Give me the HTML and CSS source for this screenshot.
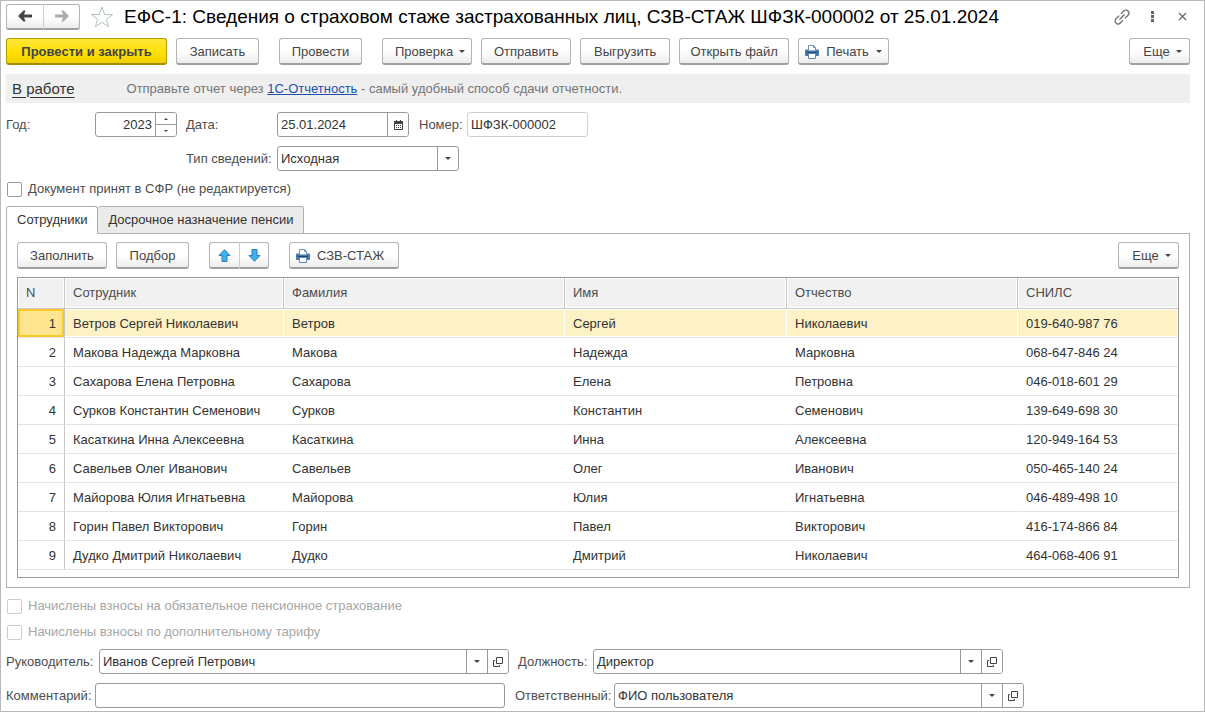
FILE: index.html
```
<!DOCTYPE html>
<html lang="ru">
<head>
<meta charset="utf-8">
<title>ЕФС-1: Сведения о страховом стаже</title>
<link rel="stylesheet" href="styles.css">
</head>
<body>
<svg class="sprite" aria-hidden="true">
  <symbol id="printer" viewBox="0 0 14 14">
    <path d="M3.500 5V.5h5l2 2V5" fill="#fff" stroke="#6b93b0"/>
    <path d="M8.500 .5v2h2" fill="none" stroke="#6b93b0"/>
    <path d="M1 4.500h2.500v1h7v-1H13q1 0 1 1V10q0 1-1 1H1q-1 0-1-1V5.500q0-1 1-1z" fill="#4678ac"/>
    <path d="M2 7.500h10" stroke="#1f4675"/>
    <path d="M3.500 8.500h7v5h-7z" fill="#fff" stroke="#5c8cb5"/>
  </symbol>
  <symbol id="open" viewBox="0 0 10 10">
    <path d="M3.500 .5h6v6h-6z" fill="none" stroke="#444"/>
    <path d="M2 3.500H.5v6h6V8" fill="none" stroke="#444"/>
  </symbol>
  <symbol id="arrow-up" viewBox="0 0 13 13">
    <path d="M6.500 .7 12 6.500H9v6H4v-6H1z" fill="#3fb0f0" stroke="#2b7db5"/>
  </symbol>
  <symbol id="arrow-down" viewBox="0 0 13 13">
    <path d="M6.500 12.300 12 6.500H9v-6H4v6H1z" fill="#3fb0f0" stroke="#2b7db5"/>
  </symbol>
</svg>
<main class="window">
  <header class="titlebar">
    <div class="group history">
      <button class="btn" aria-label="Назад"><svg width="14" height="12" viewBox="0 0 14 12"><path d="M0 6 5.500 .5h2L6 4.500h8v3H6l1.500 4h-2z" fill="#444"/></svg></button>
      <button class="btn" aria-label="Вперед"><svg width="14" height="12" viewBox="0 0 14 12"><path d="M14 6 8.500 .5h-2L8 4.500H0v3h8l-1.500 4h2z" fill="#aaa"/></svg></button>
    </div>
    <button class="plain star" aria-label="В избранное"><svg width="24" height="22" viewBox="0 0 24 22"><path d="M12 1.200 14.700 8.400 22.500 8.600 16.400 13.300 18.600 20.600 12 16.300 5.400 20.600 7.600 13.300 1.500 8.600 9.300 8.400z" fill="#fff" stroke="#b4c0c6"/></svg></button>
    <h1>ЕФС-1: Сведения о страховом стаже застрахованных лиц, СЗВ-СТАЖ ШФЗК-000002 от 25.01.2024</h1>
    <div class="tools">
      <button class="plain" aria-label="Ссылка"><svg width="16" height="16" viewBox="0 0 16 16"><g fill="none" stroke="#666" stroke-width="1.200" transform="rotate(-45 8 8)"><path d="M7 5H2.500a3 3 0 0 0 0 6H6.500M9 11h4.500a3 3 0 0 0 0-6H9.500M4.500 8h7"/></g></svg></button>
      <button class="plain" aria-label="Меню"><svg width="16" height="16" viewBox="0 0 16 16"><path d="M7 2h3v3H7zM7 6h3v3H7zM7 10h3v3H7z" fill="#666"/></svg></button>
      <button class="plain" aria-label="Закрыть"><svg width="16" height="16" viewBox="0 0 16 16"><path d="m5 4 7 7m0-7-7 7" stroke="#666" stroke-width="1.200"/></svg></button>
    </div>
  </header>

  <div class="commands">
    <button class="btn primary">Провести и закрыть</button>
    <button class="btn w-small">Записать</button>
    <button class="btn w-small spaced">Провести</button>
    <button class="btn w-medium drop spaced">Проверка<i class="caret"></i></button>
    <button class="btn w-medium">Отправить</button>
    <button class="btn w-medium">Выгрузить</button>
    <button class="btn w-wide">Открыть файл</button>
    <button class="btn w-medium iconic"><svg width="14" height="14"><use href="#printer"/></svg>Печать<i class="caret"></i></button>
    <button class="btn more">Еще<i class="caret"></i></button>
  </div>

  <div class="status">
    <a class="state" href="#">В работе</a>
    <p>Отправьте отчет через <a href="#">1С-Отчетность</a> - самый удобный способ сдачи отчетности.</p>
  </div>

  <div class="form">
    <label for="year">Год:</label>
    <div class="field year"><input id="year" value="2023"><span class="spin"><button aria-label="Больше"><i class="caret up"></i></button><button aria-label="Меньше"><i class="caret"></i></button></span></div>
    <label for="date">Дата:</label>
    <div class="line">
      <div class="field date"><input id="date" value="25.01.2024"><button aria-label="Календарь"><svg width="9" height="10" viewBox="0 0 9 10"><path d="M.5 1.500h8v8h-8z" fill="none" stroke="#444"/><path d="M0 1h9v3H0zM2 0h1v1H2zM6 0h1v1H6z" fill="#444"/><path d="M2 5.500h5M2 7.500h5" stroke="#444" stroke-dasharray="1 1"/></svg></button></div>
      <label for="number">Номер:</label>
      <div class="field number"><input id="number" value="ШФЗК-000002" readonly></div>
    </div>
    <label class="kind-label" for="kind">Тип сведений:</label>
    <div class="field kind"><select id="kind"><option>Исходная</option></select><i class="caret"></i></div>
  </div>

  <label class="check accepted"><input type="checkbox">Документ принят в СФР (не редактируется)</label>

  <div class="tabs" role="tablist">
    <button role="tab" aria-selected="true">Сотрудники</button>
    <button role="tab" aria-selected="false">Досрочное назначение пенсии</button>
  </div>
  <section class="panel">
    <div class="commands inner">
      <button class="btn w-medium">Заполнить</button>
      <button class="btn w-pick">Подбор</button>
      <div class="group move">
        <button class="btn" aria-label="Вверх"><svg width="13" height="13"><use href="#arrow-up"/></svg></button>
        <button class="btn" aria-label="Вниз"><svg width="13" height="13"><use href="#arrow-down"/></svg></button>
      </div>
      <button class="btn w-wide iconic"><svg width="14" height="14"><use href="#printer"/></svg>СЗВ-СТАЖ</button>
      <button class="btn more">Еще<i class="caret"></i></button>
    </div>
    <div class="grid">
      <table>
        <colgroup><col class="c-n"><col class="c-emp"><col class="c-last"><col class="c-first"><col class="c-mid"><col class="c-snils"></colgroup>
        <thead><tr><th>N</th><th>Сотрудник</th><th>Фамилия</th><th>Имя</th><th>Отчество</th><th>СНИЛС</th></tr></thead>
        <tbody>
          <tr class="selected"><td>1</td><td>Ветров Сергей Николаевич</td><td>Ветров</td><td>Сергей</td><td>Николаевич</td><td>019-640-987 76</td></tr>
          <tr><td>2</td><td>Макова Надежда Марковна</td><td>Макова</td><td>Надежда</td><td>Марковна</td><td>068-647-846 24</td></tr>
          <tr><td>3</td><td>Сахарова Елена Петровна</td><td>Сахарова</td><td>Елена</td><td>Петровна</td><td>046-018-601 29</td></tr>
          <tr><td>4</td><td>Сурков Константин Семенович</td><td>Сурков</td><td>Константин</td><td>Семенович</td><td>139-649-698 30</td></tr>
          <tr><td>5</td><td>Касаткина Инна Алексеевна</td><td>Касаткина</td><td>Инна</td><td>Алексеевна</td><td>120-949-164 53</td></tr>
          <tr><td>6</td><td>Савельев Олег Иванович</td><td>Савельев</td><td>Олег</td><td>Иванович</td><td>050-465-140 24</td></tr>
          <tr><td>7</td><td>Майорова Юлия Игнатьевна</td><td>Майорова</td><td>Юлия</td><td>Игнатьевна</td><td>046-489-498 10</td></tr>
          <tr><td>8</td><td>Горин Павел Викторович</td><td>Горин</td><td>Павел</td><td>Викторович</td><td>416-174-866 84</td></tr>
          <tr><td>9</td><td>Дудко Дмитрий Николаевич</td><td>Дудко</td><td>Дмитрий</td><td>Николаевич</td><td>464-068-406 91</td></tr>
        </tbody>
      </table>
    </div>
  </section>

  <div class="checks">
    <label class="check"><input type="checkbox" disabled>Начислены взносы на обязательное пенсионное страхование</label>
    <label class="check"><input type="checkbox" disabled>Начислены взносы по дополнительному тарифу</label>
  </div>

  <div class="footer">
    <div class="line">
      <label class="l-head" for="head">Руководитель:</label>
      <div class="field long"><input id="head" value="Иванов Сергей Петрович"><button aria-label="Выбрать"><i class="caret"></i></button><button aria-label="Открыть"><svg width="10" height="10"><use href="#open"/></svg></button></div>
      <label class="l-post" for="post">Должность:</label>
      <div class="field long"><input id="post" value="Директор"><button aria-label="Выбрать"><i class="caret"></i></button><button aria-label="Открыть"><svg width="10" height="10"><use href="#open"/></svg></button></div>
    </div>
    <div class="line">
      <label class="l-note" for="note">Комментарий:</label>
      <div class="field long"><input id="note"></div>
      <label class="l-resp" for="resp">Ответственный:</label>
      <div class="field long"><input id="resp" value="ФИО пользователя"><button aria-label="Выбрать"><i class="caret"></i></button><button aria-label="Открыть"><svg width="10" height="10"><use href="#open"/></svg></button></div>
    </div>
  </div>
</main>
</body>
</html>
```

FILE: styles.css
```
* { box-sizing: border-box; }
body { margin: 0; background: #fff; color: #4d4d4d; font: 13px/16px "Liberation Sans", Arial, sans-serif; }
button, input, select { font: inherit; color: inherit; margin: 0; }
svg { display: block; flex: none; }
.sprite { position: absolute; width: 0; height: 0; }
.window { min-height: 100vh; border: 1px solid #b9b9b9; padding: 2px 14px 3px 5px; }

.titlebar { display: flex; align-items: center; height: 27px; }
.titlebar h1 { flex: 1; margin: 0; font-size: 19px; line-height: 24px; font-weight: 400; color: #000; white-space: nowrap; }
.plain { border: 0; padding: 0; background: none; }
.star { margin: 0 10px; }
.tools { display: flex; gap: 14px; }

.btn { display: inline-flex; align-items: center; justify-content: center; height: 27px; padding: 1px 10px 0; border: 1px solid #b3b3b3; border-bottom: 2px solid #a0a0a0; border-radius: 3px; background: linear-gradient(#fff 50%, #ececec); color: #444; white-space: nowrap; }
.primary { min-width: 161px; border-color: #b59d00; border-bottom-color: #a08c00; background: linear-gradient(#ffe636, #ffdf00 60%, #f0cf00); font-weight: 700; }
.group { display: flex; }
.group .btn { padding: 0; }
.group .btn:first-child { border-radius: 3px 0 0 3px; border-right: 0; }
.group .btn:last-child { border-radius: 0 3px 3px 0; border-left-color: #ccc; }
.history .btn { width: 37px; height: 26px; }
.move { margin: 0 11px; }
.move .btn { width: 30px; }

.commands { display: flex; gap: 9px; margin-top: 8px; }
.spaced { margin-left: 11px; }
.w-small { min-width: 83px; }
.w-medium { min-width: 90px; }
.w-wide { min-width: 110px; }
.w-pick { min-width: 73px; }
.iconic { justify-content: flex-start; gap: 7px; padding: 1px 6px 0; }
.more { min-width: 61px; margin-left: auto; }
.drop, .more { gap: 6px; padding: 1px 6px 0 12px; }
.caret { flex: none; width: 0; height: 0; border: 3px solid transparent; border-top-color: #444; border-bottom: 0; }
.caret.up { border-top: 0; border-bottom: 3px solid #444; }

.status { display: flex; align-items: center; gap: 52px; height: 29px; margin-top: 9px; padding: 0 6px; background: #efefef; }
.status p { margin: 0; color: #757575; }
.status a { color: #1d4fb0; }
.status .state { color: #333; font-size: 15px; text-underline-offset: 3px; }

.form { display: grid; grid-template-columns: 89px 82px 100px 1fr; row-gap: 9px; margin-top: 9px; align-items: center; }
.form > label:nth-of-type(n+2) { padding-left: 9px; white-space: nowrap; }
.form .kind-label { grid-column: 3; }
.line { display: flex; align-items: center; }
.line label { white-space: nowrap; }
.date + label { flex: none; width: 58px; padding-left: 10px; }
.field { display: flex; height: 25px; border: 1px solid #999; border-radius: 3px; background: #fff; color: #333; overflow: hidden; }
.field input, .field select { flex: 1; min-width: 0; width: 100%; border: 0; padding: 0 3px; background: none; outline: 0; appearance: none; }
.field > button { flex: none; display: flex; align-items: center; justify-content: center; width: 21px; padding: 0; border: 0; border-left: 1px solid #999; background: #fff; }
.year input { text-align: right; }
.spin { display: flex; flex-direction: column; flex: none; width: 21px; border-left: 1px solid #999; }
.spin button { flex: 1; display: flex; align-items: center; justify-content: center; padding: 0; border: 0; background: #fff; }
.spin button + button { border-top: 1px solid #999; }
.spin .caret { border-width: 2px 2px 0; }
.spin .caret.up { border-width: 0 2px 2px; }
.date { width: 132px; }
.number { width: 121px; border-color: #d0d0d0; }
.kind { width: 182px; align-items: center; }
.kind select { height: 23px; border-right: 1px solid #999; }
.kind .caret { margin: 0 7px; }

.check { display: flex; align-items: center; gap: 6px; padding-left: 1px; }
.check input { appearance: none; width: 15px; height: 15px; border: 1px solid #999; border-radius: 2px; background: #fff; }
.check:has(:disabled) { color: #a6a6a6; }
.check input:disabled { border-color: #ccc; }
.accepted { margin-top: 10px; }

.tabs { display: flex; margin-top: 9px; }
.tabs button { height: 28px; padding: 0 10px; border: 1px solid #b0b0b0; border-radius: 3px 3px 0 0; background: #ebebeb; color: #333; margin-bottom: -1px; }
.tabs button + button { border-left: 0; }
.tabs [aria-selected="true"] { position: relative; border-bottom-color: #fff; background: #fff; }
.panel { border: 1px solid #b0b0b0; padding: 0 10px 9px; }
.grid { margin-top: 8px; padding-bottom: 7px; border: 1px solid #999; }
table { width: 100%; table-layout: fixed; border-collapse: separate; border-spacing: 0; }
.c-n { width: 47px; }
.c-emp { width: 219px; }
.c-last { width: 281px; }
.c-first { width: 222px; }
.c-mid { width: 231px; }
.c-snils { width: 160px; }
th, td { padding: 0 8px; text-align: left; font-weight: 400; white-space: nowrap; overflow: hidden; }
th { height: 31px; border-bottom: 1px solid #c8c8c8; border-right: 1px solid #c8c8c8; background: #f1f1f1; box-shadow: inset 0 0 0 1px #fff; }
th:last-child { border-right: 0; }
td { height: 29px; padding-top: 2px; border-bottom: 1px solid #e3e3e3; border-right: 1px solid transparent; background-clip: padding-box; color: #333; }
td:first-child { text-align: right; border-right-color: #c8c8c8; }
.selected td { background-color: #fdf1c6; box-shadow: inset 0 1px #fff, inset 0 -1px #fff; }
.selected td:first-child { background: #ffe58f; box-shadow: inset 0 0 0 2px #fbc926; }

.checks { display: grid; gap: 10px; margin-top: 10px; }
.footer { display: grid; gap: 9px; margin-top: 9px; }
.long { flex: 0 1 410px; }
.l-head { flex: none; width: 93px; }
.l-post { flex: none; width: 84px; padding-left: 9px; }
.l-note { flex: none; width: 89px; }
.l-resp { flex: none; width: 109px; padding-left: 10px; }
```
